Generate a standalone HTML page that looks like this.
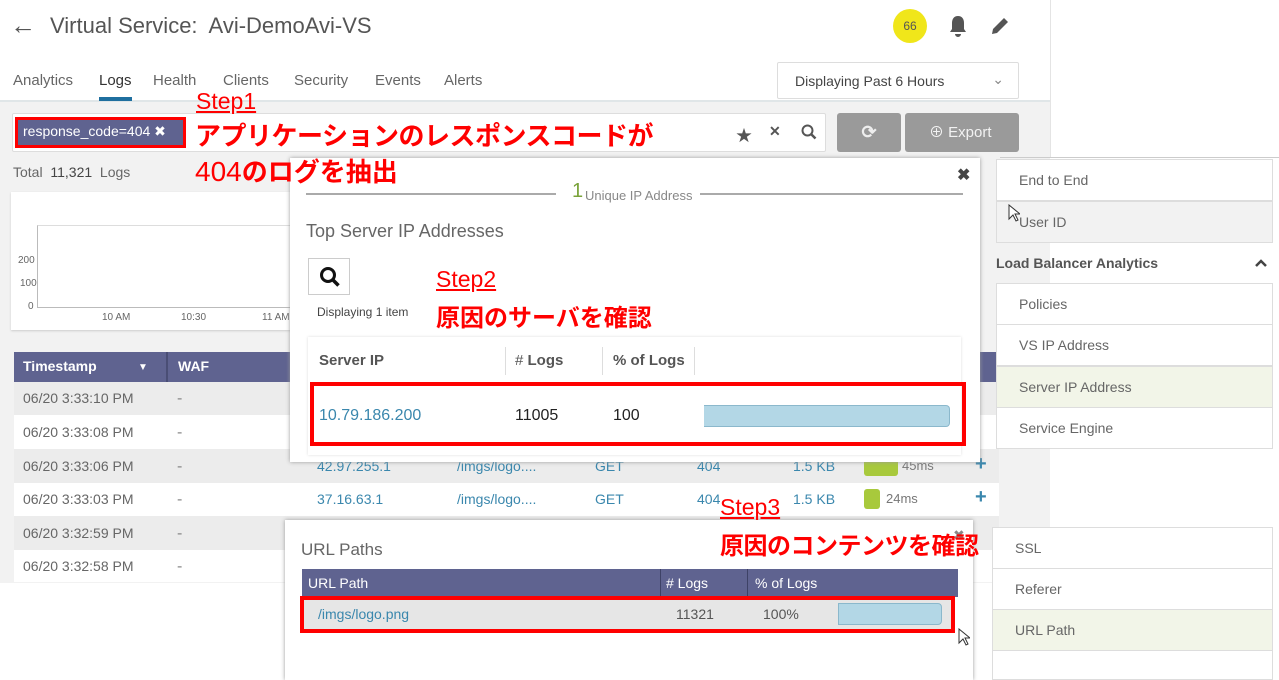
<!DOCTYPE html>
<html><head><meta charset="utf-8"><style>
*{box-sizing:border-box;margin:0;padding:0}
body{width:1279px;height:665px;overflow:hidden;position:relative;background:#fff;font-family:"Liberation Sans","Noto Sans CJK JP",sans-serif;color:#555}
.a{position:absolute;white-space:nowrap}
.red{color:#f00;font-weight:bold;font-family:"Noto Sans CJK JP","Liberation Sans",sans-serif}
.step{color:#f00;text-decoration:underline;font-size:23px;font-family:"Liberation Sans",sans-serif}
.ri{position:absolute;background:#fff;border:1px solid #ddd;font-size:14px;color:#666;padding-left:22px;display:flex;align-items:center}
</style></head><body>
<div class="a" style="left:0;top:100px;width:1050px;height:483px;background:#f2f2f2"></div>
<div class="a" style="left:1050px;top:0;width:1px;height:157px;background:#e4e4e4"></div>
<div class="a" style="left:1000px;top:157px;width:279px;height:1px;background:#ccc"></div>
<div class="a" style="left:0;top:100px;width:1050px;height:2px;background:#e0e6e8"></div>
<div class="a" style="left:10px;top:10px;font-size:26px;color:#555">&#8592;</div>
<div class="a" style="left:50px;top:13px;font-size:22px;color:#555">Virtual Service:&nbsp; Avi-DemoAvi-VS</div>
<div class="a" style="left:893px;top:9px;width:34px;height:34px;border-radius:50%;background:#f0e61a;font-size:12px;color:#555;text-align:center;line-height:34px">66</div>
<svg class="a" style="left:947px;top:14px" width="22" height="24" viewBox="0 0 22 24"><path d="M11 2c-4 0-6 3-6 7v6l-2 3h16l-2-3V9c0-4-2-7-6-7z M8 20h6a3 3 0 0 1-6 0z" fill="#555"/></svg>
<svg class="a" style="left:988px;top:14px" width="24" height="24" viewBox="0 0 24 24"><path d="M4 20l1-5L16 4l4 4L9 19z" fill="#555"/></svg>
<div class="a" style="left:13px;top:72px;font-size:15px;color:#666">Analytics</div>
<div class="a" style="left:99px;top:72px;font-size:15px;color:#333">Logs</div>
<div class="a" style="left:99px;top:97px;width:33px;height:4px;background:#1f6f9f"></div>
<div class="a" style="left:153px;top:72px;font-size:15px;color:#666">Health</div>
<div class="a" style="left:223px;top:72px;font-size:15px;color:#666">Clients</div>
<div class="a" style="left:294px;top:72px;font-size:15px;color:#666">Security</div>
<div class="a" style="left:375px;top:72px;font-size:15px;color:#666">Events</div>
<div class="a" style="left:444px;top:72px;font-size:15px;color:#666">Alerts</div>
<div class="a" style="left:777px;top:62px;width:242px;height:37px;border:1px solid #ddd;border-radius:2px;background:#fff;font-size:14px;color:#444;padding:10px 0 0 17px">Displaying Past 6 Hours<span style="position:absolute;right:14px;top:8px;color:#888">&#8964;</span></div>
<div class="a" style="left:12px;top:113px;width:814px;height:39px;background:#fff;border:1px solid #ddd;border-radius:2px"></div>
<div class="a" style="left:15px;top:117px;width:171px;height:31px;border:3px solid #f00;background:#5f6390;color:#fff;font-size:14px;padding:3px 0 0 5px">response_code=404 &#10006;</div>
<div class="a" style="left:736px;top:122px;font-size:16px;color:#555">&#9733;</div>
<div class="a" style="left:769px;top:123px;font-size:14px;color:#555;font-weight:bold">&#10005;</div>
<svg class="a" style="left:801px;top:124px" width="16" height="16" viewBox="0 0 16 16"><circle cx="6.5" cy="6.5" r="5" fill="none" stroke="#555" stroke-width="2"/><path d="M10 10l4.5 4.5" stroke="#555" stroke-width="2.5"/></svg>
<div class="a" style="left:837px;top:113px;width:64px;height:39px;background:#9a9a9a;border-radius:3px;color:#eee;text-align:center;font-size:18px;line-height:39px;font-weight:bold">&#10227;</div>
<div class="a" style="left:905px;top:113px;width:114px;height:39px;background:#9a9a9a;border-radius:3px;color:#f2f2f2;font-size:15px;line-height:39px;padding-left:24px">&#8853; Export</div>
<div class="a" style="left:13px;top:164px;font-size:14px;color:#666">Total&nbsp; <span style="color:#444">11,321</span>&nbsp; Logs</div>
<div class="a" style="left:11px;top:192px;width:290px;height:138px;background:#fff;box-shadow:0 1px 2px #ccc"></div>
<div class="a" style="left:37px;top:225px;width:260px;height:83px;border-left:1px solid #bbb;border-top:1px solid #ddd;border-bottom:1px solid #bbb"></div>
<div class="a" style="left:18px;top:255px;font-size:10px;color:#666">200</div>
<div class="a" style="left:20px;top:278px;font-size:10px;color:#666">100</div>
<div class="a" style="left:28px;top:301px;font-size:10px;color:#666">0</div>
<div class="a" style="left:102px;top:312px;font-size:10px;color:#666">10 AM</div>
<div class="a" style="left:181px;top:312px;font-size:10px;color:#666">10:30</div>
<div class="a" style="left:262px;top:312px;font-size:10px;color:#666">11 AM</div>
<div class="a" style="left:14px;top:352px;width:985px;height:230px;background:#fff"></div>
<div class="a" style="left:14px;top:352px;width:985px;height:30px;background:#5f6390"></div>
<div class="a" style="left:166px;top:352px;width:2px;height:30px;background:#4a4e75"></div>
<div class="a" style="left:23px;top:358px;font-size:14px;color:#fff;font-weight:bold">Timestamp</div>
<div class="a" style="left:138px;top:362px;font-size:10px;color:#fff">&#9660;</div>
<div class="a" style="left:178px;top:358px;font-size:14px;color:#fff;font-weight:bold">WAF</div>
<div class="a" style="left:14px;top:382px;width:985px;height:33px;background:#ececec"></div>
<div class="a" style="left:14px;top:449px;width:985px;height:34px;background:#ececec"></div>
<div class="a" style="left:14px;top:516px;width:985px;height:34px;background:#ececec"></div>
<div class="a" style="left:23px;top:390px;font-size:14px;color:#666">06/20 3:33:10 PM</div><div class="a" style="left:177px;top:390px;color:#888">-</div>
<div class="a" style="left:23px;top:424px;font-size:14px;color:#666">06/20 3:33:08 PM</div><div class="a" style="left:177px;top:424px;color:#888">-</div>
<div class="a" style="left:23px;top:458px;font-size:14px;color:#666">06/20 3:33:06 PM</div><div class="a" style="left:177px;top:458px;color:#888">-</div>
<div class="a" style="left:23px;top:491px;font-size:14px;color:#666">06/20 3:33:03 PM</div><div class="a" style="left:177px;top:491px;color:#888">-</div>
<div class="a" style="left:23px;top:525px;font-size:14px;color:#666">06/20 3:32:59 PM</div><div class="a" style="left:177px;top:525px;color:#888">-</div>
<div class="a" style="left:23px;top:558px;font-size:14px;color:#666">06/20 3:32:58 PM</div><div class="a" style="left:177px;top:558px;color:#888">-</div>
<div class="a" style="left:317px;top:458px;font-size:14px;color:#3a87ad">42.97.255.1</div>
<div class="a" style="left:457px;top:458px;font-size:14px;color:#3a87ad">/imgs/logo....</div>
<div class="a" style="left:595px;top:458px;font-size:14px;color:#3a87ad">GET</div>
<div class="a" style="left:697px;top:458px;font-size:14px;color:#3a87ad">404</div>
<div class="a" style="left:793px;top:458px;font-size:14px;color:#3a87ad">1.5 KB</div>
<div class="a" style="left:864px;top:457px;width:34px;height:19px;background:#a8c93c;border-radius:3px"></div>
<div class="a" style="left:902px;top:458px;font-size:13px;color:#777">45ms</div>
<div class="a" style="left:975px;top:453px;font-size:20px;color:#3a87ad;font-weight:bold">+</div>
<div class="a" style="left:317px;top:491px;font-size:14px;color:#3a87ad">37.16.63.1</div>
<div class="a" style="left:457px;top:491px;font-size:14px;color:#3a87ad">/imgs/logo....</div>
<div class="a" style="left:595px;top:491px;font-size:14px;color:#3a87ad">GET</div>
<div class="a" style="left:697px;top:491px;font-size:14px;color:#3a87ad">404</div>
<div class="a" style="left:793px;top:491px;font-size:14px;color:#3a87ad">1.5 KB</div>
<div class="a" style="left:864px;top:489px;width:16px;height:20px;background:#a8c93c;border-radius:3px"></div>
<div class="a" style="left:886px;top:491px;font-size:13px;color:#777">24ms</div>
<div class="a" style="left:975px;top:486px;font-size:20px;color:#3a87ad;font-weight:bold">+</div>
<div class="a" style="left:290px;top:158px;width:690px;height:304px;background:#fff;box-shadow:0 0 4px #999"></div>
<div class="a" style="left:957px;top:165px;font-size:16px;color:#444;font-weight:bold">&#10006;</div>
<div class="a" style="left:306px;top:193px;width:250px;height:2px;background:#aaa"></div>
<div class="a" style="left:572px;top:180px;font-size:20px;color:#7aa33a">1</div>
<div class="a" style="left:585px;top:188px;font-size:13px;color:#888">Unique IP Address</div>
<div class="a" style="left:700px;top:193px;width:263px;height:2px;background:#aaa"></div>
<div class="a" style="left:306px;top:221px;font-size:18px;color:#666">Top Server IP Addresses</div>
<div class="a" style="left:308px;top:258px;width:42px;height:37px;border:1px solid #ccc"></div>
<svg class="a" style="left:319px;top:266px" width="22" height="22" viewBox="0 0 22 22"><circle cx="9" cy="9" r="6.5" fill="none" stroke="#111" stroke-width="3"/><path d="M13.5 13.5l6 6" stroke="#111" stroke-width="3.5"/></svg>
<div class="a" style="left:317px;top:305px;font-size:12px;color:#444">Displaying 1 item</div>
<div class="a" style="left:308px;top:337px;width:653px;height:118px;background:#fff;box-shadow:0 0 3px #ddd"></div>
<div class="a" style="left:319px;top:352px;font-size:15px;color:#555;font-weight:bold">Server IP</div>
<div class="a" style="left:505px;top:347px;width:1px;height:28px;background:#ddd"></div>
<div class="a" style="left:515px;top:352px;font-size:15px;color:#555;font-weight:bold"><span style="font-weight:normal">#</span> Logs</div>
<div class="a" style="left:602px;top:347px;width:1px;height:28px;background:#ddd"></div>
<div class="a" style="left:613px;top:352px;font-size:15px;color:#555;font-weight:bold">% of Logs</div>
<div class="a" style="left:694px;top:347px;width:1px;height:28px;background:#ddd"></div>
<div class="a" style="left:310px;top:382px;width:656px;height:64px;border:4px solid #f00"></div>
<div class="a" style="left:319px;top:407px;font-size:16px;color:#3a87ad">10.79.186.200</div>
<div class="a" style="left:515px;top:407px;font-size:16px;color:#222">11005</div>
<div class="a" style="left:613px;top:407px;font-size:16px;color:#222">100</div>
<div class="a" style="left:704px;top:405px;width:246px;height:22px;background:#b3d7e6;border:1px solid #8bb8cc;border-left:none;border-radius:0 4px 4px 0"></div>
<div class="ri" style="left:996px;top:159px;width:277px;height:42px">End to End</div>
<div class="ri" style="left:996px;top:201px;width:277px;height:42px;background:#f2f2f2">User ID</div>
<svg class="a" style="left:1008px;top:204px" width="12" height="18" viewBox="0 0 12 18"><path d="M1 1v14l4-4 3 6 2-1-3-6h5z" fill="#fff" stroke="#333"/></svg>
<div class="a" style="left:996px;top:255px;font-size:14px;color:#555;font-weight:bold">Load Balancer Analytics</div>
<svg class="a" style="left:1254px;top:258px" width="14" height="10" viewBox="0 0 14 10"><path d="M2 8l5-5 5 5" fill="none" stroke="#444" stroke-width="2.5"/></svg>
<div class="ri" style="left:996px;top:283px;width:277px;height:42px">Policies</div>
<div class="ri" style="left:996px;top:324px;width:277px;height:42px">VS IP Address</div>
<div class="ri" style="left:996px;top:366px;width:277px;height:42px;background:#f2f5e8">Server IP Address</div>
<div class="ri" style="left:996px;top:407px;width:277px;height:42px">Service Engine</div>
<div class="a" style="left:285px;top:520px;width:688px;height:160px;background:#fff;box-shadow:0 0 4px #999"></div>
<div class="a" style="left:301px;top:540px;font-size:17px;color:#666">URL Paths</div>
<div class="a" style="left:302px;top:569px;width:656px;height:28px;background:#5f6390"></div>
<div class="a" style="left:660px;top:569px;width:1px;height:28px;background:#3e4266"></div>
<div class="a" style="left:747px;top:569px;width:1px;height:28px;background:#3e4266"></div>
<div class="a" style="left:308px;top:575px;font-size:14px;color:#fff">URL Path</div>
<div class="a" style="left:666px;top:575px;font-size:14px;color:#fff"># Logs</div>
<div class="a" style="left:755px;top:575px;font-size:14px;color:#fff">% of Logs</div>
<div class="a" style="left:300px;top:596px;width:655px;height:37px;border:4px solid #f00;background:#e6e6e6"></div>
<div class="a" style="left:318px;top:606px;font-size:14px;color:#3a87ad">/imgs/logo.png</div>
<div class="a" style="left:676px;top:606px;font-size:14px;color:#555">11321</div>
<div class="a" style="left:763px;top:606px;font-size:14px;color:#555">100%</div>
<div class="a" style="left:838px;top:603px;width:104px;height:22px;background:#b3d7e6;border:1px solid #8bb8cc;border-radius:0 4px 4px 0"></div>
<svg class="a" style="left:958px;top:628px" width="12" height="20" viewBox="0 0 12 20"><path d="M1 1v14l4-4 3 6 2-1-3-6h5z" fill="#fff" stroke="#333"/></svg>
<div class="a" style="left:953px;top:527px;font-size:14px;color:#888">&#10006;</div>
<div class="ri" style="left:992px;top:527px;width:281px;height:42px">SSL</div>
<div class="ri" style="left:992px;top:568px;width:281px;height:42px">Referer</div>
<div class="ri" style="left:992px;top:609px;width:281px;height:42px;background:#f2f5e8">URL Path</div>
<div class="ri" style="left:992px;top:650px;width:281px;height:30px"></div>
<div class="a step" style="left:196px;top:88px">Step1</div>
<div class="a red" style="left:195px;top:119px;font-size:26px;line-height:32px;letter-spacing:-0.5px">アプリケーションのレスポンスコードが</div>
<div class="a red" style="left:195px;top:155px;font-size:26px;line-height:32px"><span style="font-family:'Liberation Sans';font-weight:normal;font-size:28px">404</span>のログを抽出</div>
<div class="a step" style="left:436px;top:266px">Step2</div>
<div class="a red" style="left:436px;top:300px;font-size:24px;line-height:32px">原因のサーバを確認</div>
<div class="a step" style="left:720px;top:494px">Step3</div>
<div class="a red" style="left:720px;top:528px;font-size:24px;line-height:32px;letter-spacing:-0.5px">原因のコンテンツを確認</div>
</body></html>
